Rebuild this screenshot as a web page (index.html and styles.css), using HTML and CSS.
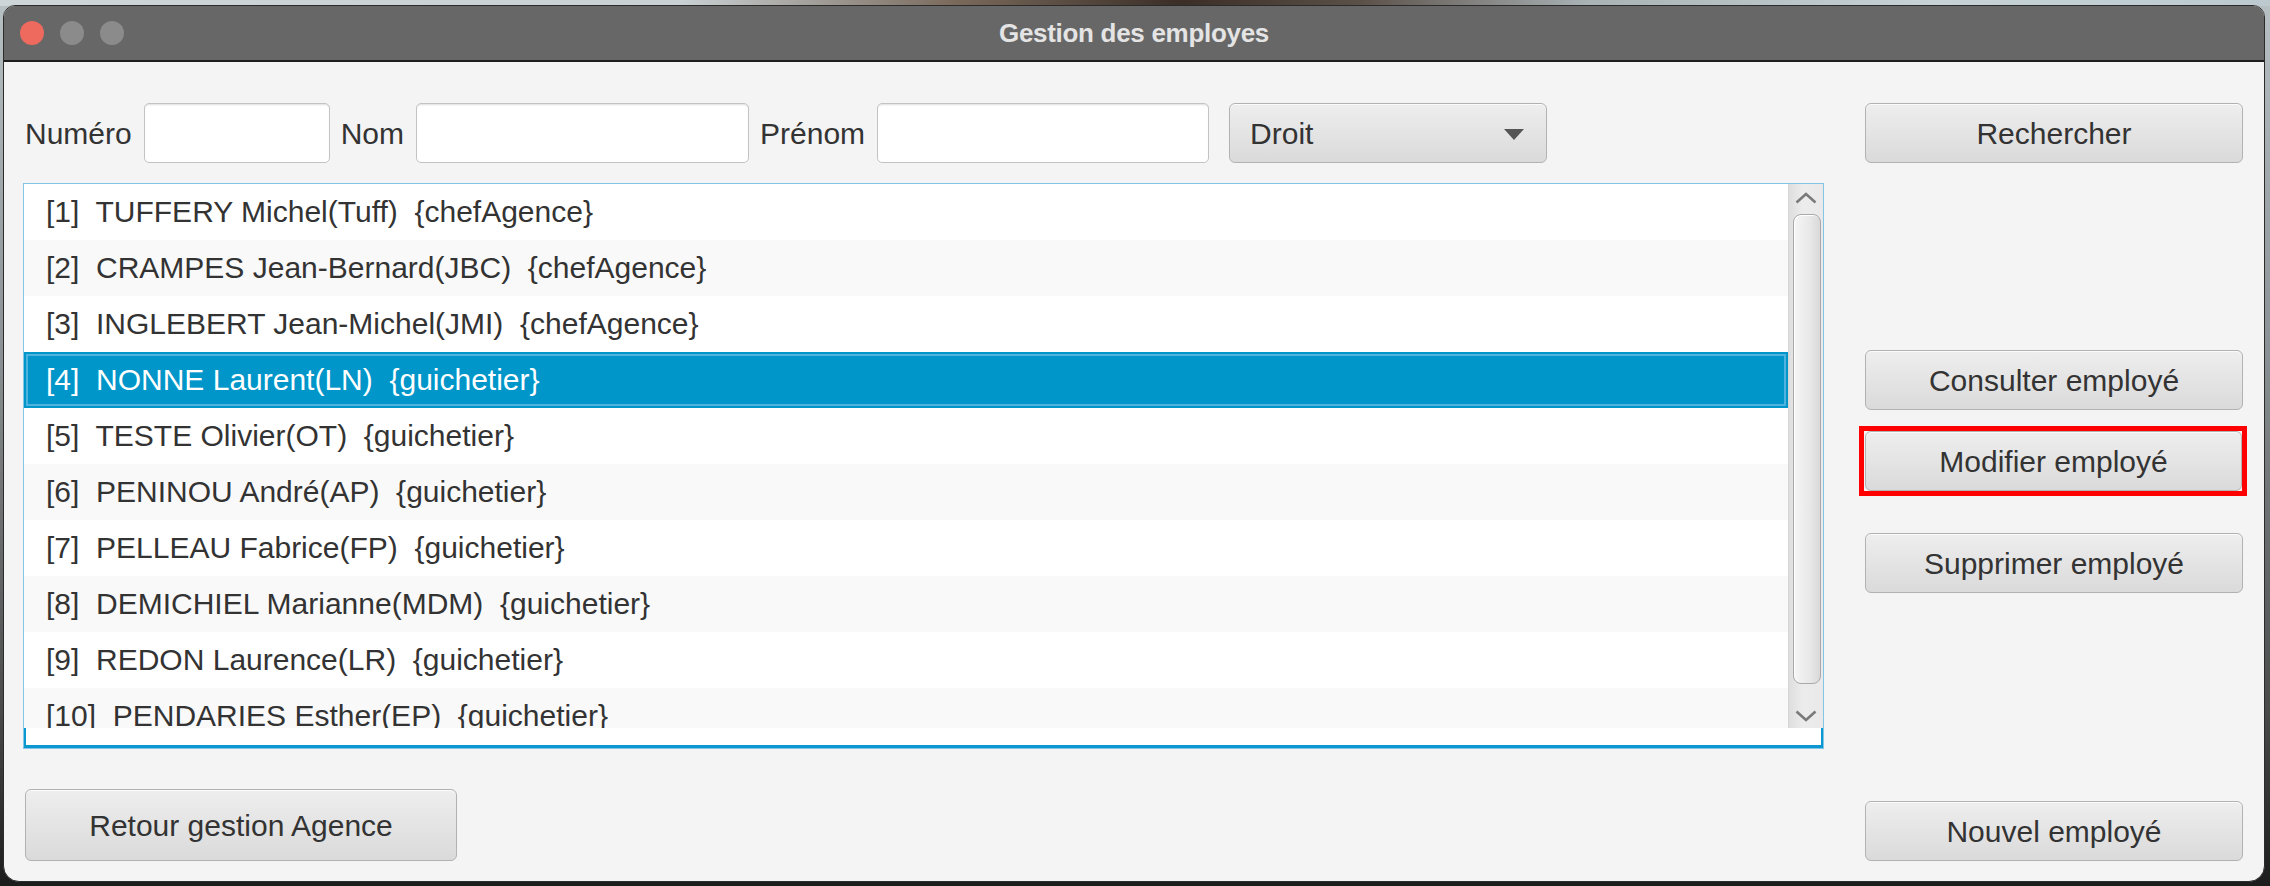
FILE: index.html
```html
<!DOCTYPE html>
<html lang="fr">
<head>
<meta charset="utf-8">
<title>Gestion des employes</title>
<link rel="stylesheet" href="styles.css">
</head>
<body>
<div class="window">
  <div class="titlebar">
    <div class="lights">
      <span class="light red"></span>
      <span class="light gray"></span>
      <span class="light gray"></span>
    </div>
    <div class="title">Gestion des employes</div>
    <div></div>
  </div>
  <div class="content">
    <div class="left">
      <div class="toprow">
        <span class="lbl first">Numéro</span>
        <span class="field w-num"></span>
        <span class="lbl">Nom</span>
        <span class="field w-nom"></span>
        <span class="lbl">Prénom</span>
        <span class="field w-pre"></span>
        <div class="combo">
          <span>Droit</span>
          <svg class="combo-arrow" width="20" height="11" viewBox="0 0 20 11"><polygon points="0,0 20,0 10,11" fill="#555"/></svg>
        </div>
      </div>
      <div class="list">
        <div class="viewport">
          <div class="rows">
            <div class="row">[1]  TUFFERY Michel(Tuff)  {chefAgence}</div>
            <div class="row alt">[2]  CRAMPES Jean-Bernard(JBC)  {chefAgence}</div>
            <div class="row">[3]  INGLEBERT Jean-Michel(JMI)  {chefAgence}</div>
            <div class="row selected">[4]  NONNE Laurent(LN)  {guichetier}</div>
            <div class="row">[5]  TESTE Olivier(OT)  {guichetier}</div>
            <div class="row alt">[6]  PENINOU André(AP)  {guichetier}</div>
            <div class="row">[7]  PELLEAU Fabrice(FP)  {guichetier}</div>
            <div class="row alt">[8]  DEMICHIEL Marianne(MDM)  {guichetier}</div>
            <div class="row">[9]  REDON Laurence(LR)  {guichetier}</div>
            <div class="row alt">[10]  PENDARIES Esther(EP)  {guichetier}</div>
          </div>
          <div class="scrollbar">
            <div class="sb-btn">
              <svg width="22" height="12" viewBox="0 0 22 12"><polyline points="1.5,10.5 11,2 20.5,10.5" fill="none" stroke="#7a7a7a" stroke-width="2.6"/></svg>
            </div>
            <div class="track"><div class="thumb"></div></div>
            <div class="sb-btn down">
              <svg width="22" height="12" viewBox="0 0 22 12"><polyline points="1.5,1.5 11,10 20.5,1.5" fill="none" stroke="#7a7a7a" stroke-width="2.6"/></svg>
            </div>
          </div>
        </div>
      </div>
      <div class="btn retour">Retour gestion Agence</div>
    </div>
    <div class="right">
      <div class="btn b-rech">Rechercher</div>
      <div class="btn b-cons">Consulter employé</div>
      <div class="mark">
        <div class="btn b-mod">Modifier employé</div>
      </div>
      <div class="btn b-sup">Supprimer employé</div>
      <div class="btn b-nouv">Nouvel employé</div>
    </div>
  </div>
</div>
</body>
</html>
```
FILE: styles.css
```css
html, body {
  margin: 0;
  padding: 0;
}
body {
  width: 2270px;
  height: 886px;
  overflow: hidden;
  font-family: "Liberation Sans", Arial, sans-serif;
  background:
    linear-gradient(to right, #cdd5d8 0%, #c9d1d4 30%, #7a6a5c 42%, #3a2e27 52%, #5c5149 60%, #a9b3b6 70%, #c6d2d6 85%, #bccacf 100%) top left / 100% 6px no-repeat,
    linear-gradient(to bottom, #b7c0c3 0%, #8a9093 40%, #4a4a4a 80%, #1c1c1c 100%);
}
.window {
  box-sizing: border-box;
  width: 2262px;
  height: 877px;
  margin: 5px 0 0 3px;
  border: 1px solid #2b2b2b;
  border-radius: 12px 12px 16px 16px;
  background: #f4f4f4;
  overflow: hidden;
  display: flex;
  flex-direction: column;
}
.titlebar {
  box-sizing: border-box;
  height: 56px;
  flex: none;
  background: #676767;
  border-bottom: 2px solid #1e1e1e;
  display: grid;
  grid-template-columns: 1fr auto 1fr;
  align-items: center;
}
.lights {
  display: flex;
  gap: 16px;
  padding-left: 16px;
}
.light {
  width: 24px;
  height: 24px;
  border-radius: 50%;
}
.light.red { background: #ee6a5f; }
.light.gray { background: #8b8b8b; }
.title {
  color: #e4e4e4;
  font-weight: bold;
  font-size: 26px;
  letter-spacing: -0.3px;
}
.content {
  flex: 1;
  display: flex;
  gap: 41px;
  padding: 0 21px 0 19px;
  color: #333333;
  font-size: 30px;
}
.left {
  width: 1801px;
  display: flex;
  flex-direction: column;
}
.toprow {
  margin-top: 41px;
  height: 60px;
  display: flex;
  align-items: center;
}
.lbl {
  margin-right: 12px;
  padding-top: 2px;
}
.lbl.first { margin-left: 2px; }
.field {
  box-sizing: border-box;
  height: 60px;
  margin-right: 11px;
  background: #ffffff;
  border: 1px solid #c3c3c3;
  border-radius: 5px;
  box-shadow: inset 0 2px 2px -1px rgba(0,0,0,0.13);
}
.w-num { width: 186px; }
.w-nom { width: 333px; }
.w-pre { width: 332px; margin-right: 20px; }
.combo {
  box-sizing: border-box;
  width: 318px;
  height: 60px;
  display: flex;
  align-items: center;
  justify-content: space-between;
  padding: 2px 22px 0 20px;
  border: 1px solid #b2b2b2;
  border-radius: 6px;
  background: linear-gradient(to bottom, #eeeeee, #dadada);
  box-shadow: inset 0 1px 0 rgba(255,255,255,0.75);
}
.combo-arrow { display: block; }
.list {
  box-sizing: border-box;
  margin-top: 20px;
  height: 566px;
  border: 1px solid #82c5e6;
  background: #ffffff;
  box-shadow: inset 0 -3px 0 #0b97d0, inset 2px 0 0 #0b97d0, inset -2px 0 0 #0b97d0;
}
.viewport {
  height: 544px;
  display: flex;
  overflow: hidden;
}
.rows {
  flex: 1;
  overflow: hidden;
}
.row {
  height: 56px;
  line-height: 56px;
  padding-left: 22px;
  white-space: pre;
  background: #ffffff;
}
.row.alt { background: #f9f9f9; }
.row.selected {
  background: #0096c9;
  color: #ffffff;
  box-shadow: inset 0 0 0 2px #0096c9, inset 0 0 0 4px #4eb3de;
}
.scrollbar {
  box-sizing: border-box;
  width: 35px;
  display: flex;
  flex-direction: column;
  background: linear-gradient(to right, #dedede, #ececec 40%, #e9e9e9);
  border-left: 1px solid #d6d6d6;
}
.sb-btn {
  height: 28px;
  flex: none;
  display: flex;
  align-items: center;
  justify-content: center;
}
.sb-btn.down { padding-top: 4px; box-sizing: border-box; }
.track {
  flex: 1;
  padding: 2px 2px 0 4px;
}
.thumb {
  box-sizing: border-box;
  height: 470px;
  border: 1px solid #a9a9a9;
  border-radius: 8px;
  background: linear-gradient(to right, #f6f6f6, #e8e8e8 60%, #d9d9d9);
  box-shadow: inset 1px 1px 0 #ffffff;
}
.btn {
  box-sizing: border-box;
  height: 60px;
  flex: none;
  display: flex;
  align-items: center;
  justify-content: center;
  padding-top: 2px;
  border: 1px solid #b2b2b2;
  border-radius: 6px;
  background: linear-gradient(to bottom, #eeeeee, #dadada);
  box-shadow: inset 0 1px 0 rgba(255,255,255,0.75);
  white-space: nowrap;
}
.retour {
  margin-top: 40px;
  margin-left: 2px;
  width: 432px;
  height: 72px;
}
.right {
  width: 378px;
  display: flex;
  flex-direction: column;
}
.b-rech { margin-top: 41px; }
.b-cons { margin-top: 187px; }
.mark {
  margin: 16px -4px 0 -6px;
  padding: 0 0 0 1px;
  border: 5px solid #ff0000;
  flex: none;
}
.b-mod { width: 377px; }
.b-sup { margin-top: 37px; }
.b-nouv { margin-top: 208px; }
```
